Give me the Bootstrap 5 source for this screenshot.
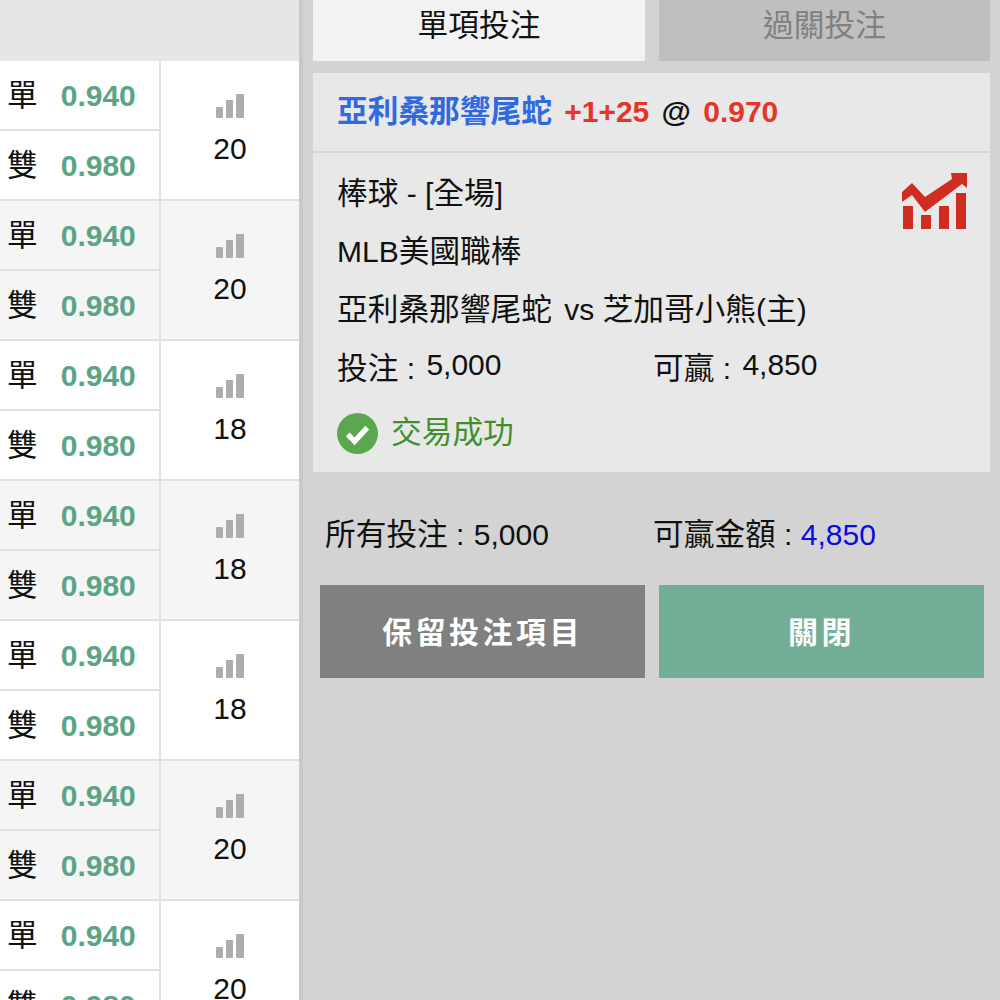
<!DOCTYPE html>
<html lang="zh-Hant">
<head>
<meta charset="utf-8">
<title>投注</title>
<link rel="stylesheet" href="https://cdn.jsdelivr.net/npm/bootstrap@5.3.0/dist/css/bootstrap.min.css">
<style>
html,body{height:1000px;overflow:hidden;margin:0}
body{font-family:"Liberation Sans","Noto Sans CJK TC",sans-serif;font-size:30px;color:#111;background:#d3d3d3}
.cj{font-size:30.7px}
.stage{height:1000px;overflow:hidden}
.odds-pane{width:299px;flex:none}
.pane-gutter{width:4px;flex:none;background:#c9c9c9}
.odds-head{height:61px;background:#e6e6e6}
.odds-row{height:140px;background:#fff}
.odds-row.alt{background:#f5f5f5}
.odds-left{width:159px;flex:none}
.odds-cell{height:70px;border-bottom:2px solid #e1e1e1;padding-left:7px;line-height:70px;white-space:nowrap}
.odds-val{color:#5aa585;font-weight:700;margin-left:23px}
.odds-right{border-left:2px solid #e1e1e1;border-bottom:2px solid #e1e1e1;padding-top:33px;line-height:36px}
.odds-right svg{display:block;margin:0 auto 13px;width:28px;height:24px}
.bet-pane{padding:0 10px}
.tab-box{height:61px;width:332px;line-height:52px}
.tab-on{background:#f2f2f2}
.tab-off{background:#bfbfbf;color:#808080;width:331px}
.slip{width:677px;margin-top:12px;background:#e8e8e8;height:399px}
.slip-head{height:80px;border-bottom:2px solid #d6d6d6;padding:0 24px;line-height:78px;white-space:nowrap}
.team{color:#2f6ae0;font-weight:700}
.hot{color:#e5352a;font-weight:700}
.slip-body{padding:12px 24px 0}
.slip-line{height:58px;line-height:58px}
.slip-line svg{width:100px;height:80px;margin:-5px -14px -17px 0}
.half{width:316px}
.stake-line{line-height:60px}
.lift{position:relative;top:-4px;margin-left:3px}
.vs-gap{margin-left:4px}
.done{color:#3f8f2c;margin-top:7px;line-height:58px;height:58px;gap:13px}
.done svg{width:41px;height:41px}
.totals{padding-left:12px;margin-top:43px;height:40px;line-height:40px}
.totals .half{width:328px}
.val-gap{margin-left:1px}
.blue-val{color:#0a0ae6}
.act-row{margin-top:30px;padding-left:7px;gap:14px}
.act{width:325px;height:93px;border-radius:0;border:0;color:#fff;font-size:30px;font-weight:700;letter-spacing:3.5px;padding:2px 0 0}
.act-grey,.act-grey:hover{background:#808080;color:#fff}
.act-green,.act-green:hover{background:#72ad95;color:#fff}
</style>
</head>
<body>
<div class="stage d-flex">
  <div class="odds-pane" id="odds"><div class="odds-head"></div></div>
  <div class="pane-gutter"></div>
  <div class="bet-pane flex-grow-1">
    <div class="d-flex" style="gap:14px">
      <div class="tab-box tab-on text-center cj">單項投注</div>
      <div class="tab-box tab-off text-center cj">過關投注</div>
    </div>
    <div class="slip">
      <div class="slip-head"><span class="team cj">亞利桑那響尾蛇</span> <span class="hot ms-1">+1+25</span> <span class="fw-bold ms-1">@</span> <span class="hot ms-1">0.970</span></div>
      <div class="slip-body">
        <div class="slip-line d-flex justify-content-between align-items-start">
          <span><span class="cj">棒球</span> - [<span class="cj">全場</span>]</span>
          <svg viewBox="0 0 100 80" aria-hidden="true"><g fill="#cf2d22"><rect x="23" y="46" width="10" height="23"/><rect x="41" y="55" width="10" height="14"/><rect x="59" y="46" width="10" height="23"/><rect x="76" y="33" width="10" height="36"/><path d="M22 32 32 23 45 37 72 19 71 13 87 13 87 28 82 24 45 52 32 35 22 42Z"/></g></svg>
        </div>
        <div class="slip-line">MLB<span class="cj">美國職棒</span></div>
        <div class="slip-line"><span class="cj">亞利桑那響尾蛇</span> <span class="vs-gap">vs</span> <span class="cj">芝加哥小熊</span>(<span class="cj">主</span>)</div>
        <div class="slip-line stake-line d-flex">
          <div class="half"><span class="cj">投注</span> : <span class="lift">5,000</span></div>
          <div><span class="cj">可贏</span> : <span class="lift">4,850</span></div>
        </div>
        <div class="done d-flex align-items-center">
          <svg viewBox="0 0 42 42" aria-hidden="true"><circle cx="21" cy="21" r="21" fill="#5aa74e"/><path d="M11 22 18 29 31 15" fill="none" stroke="#fff" stroke-width="5.5"/></svg>
          <span class="cj">交易成功</span>
        </div>
      </div>
    </div>
    <div class="totals d-flex">
      <div class="half"><span class="cj">所有投注</span> : <span class="val-gap">5,000</span></div>
      <div><span class="cj">可贏金額</span> : <span class="blue-val">4,850</span></div>
    </div>
    <div class="act-row d-flex">
      <button class="btn act act-grey" type="button">保留投注項目</button>
      <button class="btn act act-green" type="button">關閉</button>
    </div>
  </div>
</div>
<script>
var counts=[20,20,18,18,18,20,20],h='';
var bars='<svg viewBox="0 0 28 24" aria-hidden="true"><g fill="#adadad"><rect x="0" y="13" width="7" height="11" rx="1"/><rect x="10" y="6" width="7" height="18" rx="1"/><rect x="20" y="0" width="8" height="24" rx="1"/></g></svg>';
counts.forEach(function(n,i){
  h+='<div class="odds-row d-flex'+(i%2?' alt':'')+'"><div class="odds-left"><div class="odds-cell"><span class="cj">單</span><span class="odds-val">0.940</span></div><div class="odds-cell"><span class="cj">雙</span><span class="odds-val">0.980</span></div></div><div class="odds-right flex-grow-1 text-center">'+bars+n+'</div></div>';
});
document.getElementById('odds').insertAdjacentHTML('beforeend',h);
</script>
<script src="https://cdn.jsdelivr.net/npm/bootstrap@5.3.0/dist/js/bootstrap.bundle.min.js"></script>
</body>
</html>
